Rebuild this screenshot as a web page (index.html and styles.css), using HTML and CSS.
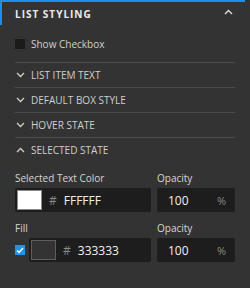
FILE: index.html
```html
<!DOCTYPE html>
<html>
<head>
<meta charset="utf-8">
<link rel="stylesheet" href="styles.css">
</head>
<body>
<div class="panel">
  <div class="header">
    <span class="title">LIST STYLING</span>
    <svg class="chev-up" width="9" height="6" viewBox="0 0 9 6"><path d="M1 5 L4.5 1.5 L8 5" fill="none" stroke="#e0e0e0" stroke-width="1.4"/></svg>
  </div>
  <div class="content">
    <label class="check-row">
      <span class="box"></span>
      <span class="check-label">Show Checkbox</span>
    </label>
    <div class="sections">
      <div class="section"><svg class="chev" width="9" height="6" viewBox="0 0 9 6"><path d="M1 1 L4.5 4.5 L8 1" fill="none" stroke="#cfcfcf" stroke-width="1.3"/></svg><span>LIST ITEM TEXT</span></div>
      <div class="section"><svg class="chev" width="9" height="6" viewBox="0 0 9 6"><path d="M1 1 L4.5 4.5 L8 1" fill="none" stroke="#cfcfcf" stroke-width="1.3"/></svg><span>DEFAULT BOX STYLE</span></div>
      <div class="section"><svg class="chev" width="9" height="6" viewBox="0 0 9 6"><path d="M1 1 L4.5 4.5 L8 1" fill="none" stroke="#cfcfcf" stroke-width="1.3"/></svg><span>HOVER STATE</span></div>
      <div class="section open"><svg class="chev" width="9" height="6" viewBox="0 0 9 6"><path d="M1 5 L4.5 1.5 L8 5" fill="none" stroke="#cfcfcf" stroke-width="1.3"/></svg><span>SELECTED STATE</span></div>
    </div>
    <div class="field-row first">
      <div class="field color-field">
        <div class="label">Selected Text Color</div>
        <div class="input color-input">
          <span class="swatch white"></span>
          <span class="hash">#</span>
          <span class="value">FFFFFF</span>
        </div>
      </div>
      <div class="field opacity-field">
        <div class="label">Opacity</div>
        <div class="input num-input">
          <span class="value">100</span>
          <span class="unit">%</span>
        </div>
      </div>
    </div>
    <div class="field-row second">
      <div class="field color-field">
        <div class="label">Fill</div>
        <div class="fill-wrap">
          <span class="checked"><svg width="8" height="7" viewBox="0 0 8 7"><path d="M1 3.5 L3 5.5 L7 1" fill="none" stroke="#fff" stroke-width="1.4"/></svg></span>
          <div class="input color-input grow">
            <span class="swatch dark"></span>
            <span class="hash">#</span>
            <span class="value">333333</span>
          </div>
        </div>
      </div>
      <div class="field opacity-field">
        <div class="label">Opacity</div>
        <div class="input num-input">
          <span class="value">100</span>
          <span class="unit">%</span>
        </div>
      </div>
    </div>
  </div>
</div>
</body>
</html>
```
FILE: styles.css
```css
html, body {
  margin: 0;
  padding: 0;
  background: #333333;
}
body {
  width: 250px;
  height: 288px;
  overflow: hidden;
  font-family: "Open Sans", "Noto Sans", sans-serif;
  color: #d8d8d8;
}
.panel {
  width: 245px;
}
.header {
  height: 23px;
  border-top: 2px solid #1a8ff0;
  border-left: 2px solid #1a8ff0;
  display: flex;
  align-items: center;
  justify-content: space-between;
  padding: 0 12px 0 13px;
}
.title {
  font-size: 10px;
  font-weight: 700;
  letter-spacing: 1px;
  color: #ececec;
  margin-top: 1px;
}
.chev-up {
  margin-top: -3px;
}
.content {
  padding: 0 10px 0 15px;
}
.check-row {
  display: flex;
  align-items: center;
  height: 37px;
  gap: 6px;
}
.box {
  width: 10px;
  height: 10px;
  background: #1b1b1b;
  margin-top: 1px;
}
.check-label {
  font-size: 10px;
  color: #d0d0d0;
}
.section {
  height: 24px;
  border-top: 1px solid #4a4a4a;
  display: flex;
  align-items: center;
  gap: 6px;
  padding-left: 1px;
  font-size: 10px;
  color: #cfcfcf;
}
.section .chev {
  flex: none;
}
.field-row {
  display: flex;
  gap: 6px;
}
.field-row.first {
  margin-top: 7px;
}
.field-row.second {
  margin-top: 7px;
}
.color-field {
  width: 136px;
}
.opacity-field {
  width: 78px;
}
.label {
  font-size: 10px;
  color: #d6d6d6;
  height: 19px;
  line-height: 18px;
}
.input {
  height: 24px;
  background: #1d1d1d;
  border-radius: 2px;
  display: flex;
  align-items: center;
  box-sizing: border-box;
}
.color-input {
  padding-left: 2px;
}
.swatch {
  width: 25px;
  height: 20px;
  box-sizing: border-box;
  border: 1px solid #5a5a5a;
}
.swatch.white {
  background: #ffffff;
  border-color: #8a8a8a;
}
.swatch.dark {
  background: #333333;
  border-color: #5e5e5e;
}
.hash {
  color: #8a8a8a;
  font-size: 12px;
  margin-left: 7px;
}
.value {
  color: #f2f2f2;
  font-size: 12px;
  margin-left: 7px;
}
.num-input {
  justify-content: space-between;
  padding: 0 9px 0 4px;
}
.unit {
  color: #8a8a8a;
  font-size: 11px;
}
.fill-wrap {
  display: flex;
  align-items: center;
  gap: 4px;
}
.checked {
  width: 10px;
  height: 10px;
  background: #1b95f2;
  display: flex;
  align-items: center;
  justify-content: center;
  flex: none;
}
.grow {
  flex: 1;
}
```
